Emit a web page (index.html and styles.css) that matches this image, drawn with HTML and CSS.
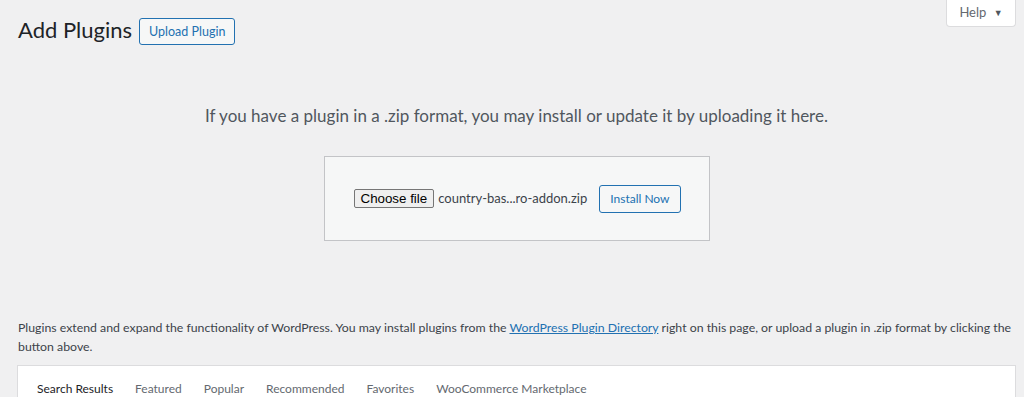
FILE: index.html
```html
<!DOCTYPE html>
<html lang="en">
<head>
    <meta charset="UTF-8">
    <title>Add Plugins</title>
    <link rel="stylesheet" href="styles.css">
</head>
<body>
    <div class="help-tab">
        <button class="help-link">Help <span class="arrow">&#9660;</span></button>
    </div>

    <div class="wrap">
        <div class="title-row">
            <h1>Add Plugins</h1>
            <a href="#" class="page-action">Upload Plugin</a>
        </div>

        <div class="upload-plugin">
            <p class="install-help">If you have a plugin in a .zip format, you may install or update it by uploading it here.</p>
            <form class="upload-form">
                <span class="file-input">
                    <span class="file-button">Choose file</span>
                    <span class="file-name">country-bas...ro-addon.zip</span>
                </span>
                <button type="button" class="button">Install Now</button>
            </form>
        </div>

        <p class="intro">Plugins extend and expand the functionality of WordPress. You may install plugins from the <a href="#">WordPress Plugin Directory</a> right on this page, or upload a plugin in .zip format by clicking the button above.</p>

        <div class="filter-bar">
            <ul class="filter-links">
                <li class="current">Search Results</li>
                <li>Featured</li>
                <li>Popular</li>
                <li>Recommended</li>
                <li>Favorites</li>
                <li>WooCommerce Marketplace</li>
            </ul>
        </div>
    </div>
</body>
</html>
```

FILE: styles.css
```css
body {
    margin: 0;
    background: #f0f0f1;
    color: #3c434a;
    font-family: Lato, sans-serif;
    font-size: 13px;
    line-height: 1.4;
    overflow: hidden;
}

.help-tab {
    position: absolute;
    top: 0;
    right: 8px;
}

.help-link {
    width: 70px;
    height: 27px;
    background: #fff;
    border: 1px solid #dcdcde;
    border-top: none;
    border-radius: 0 0 4px 4px;
    color: #646970;
    font-family: inherit;
    font-size: 13px;
    padding: 0 0 2px;
}

.help-link .arrow {
    font-size: 9px;
    margin-left: 4px;
    vertical-align: 1px;
    color: #50575e;
}

.wrap {
    padding: 0 8px 0 17px;
}

.title-row {
    display: flex;
    align-items: center;
    padding-top: 16px;
}

h1 {
    margin: 0 0 0 1px;
    font-size: 22px;
    font-weight: 400;
    color: #1d2327;
    line-height: 1.3;
}

.page-action {
    margin-left: 7px;
    margin-top: 2px;
    padding: 0 9px;
    height: 27px;
    line-height: 26px;
    border: 1px solid #2271b1;
    border-radius: 3px;
    background: #f6f7f7;
    color: #2271b1;
    text-decoration: none;
    font-size: 12.5px;
    white-space: nowrap;
    box-sizing: border-box;
}

.upload-plugin {
    display: flex;
    flex-direction: column;
    align-items: center;
}

.install-help {
    margin: 58px 0 0;
    font-size: 17px;
    color: #50575e;
    line-height: 1.5;
}

.upload-form {
    margin-top: 27px;
    width: 327px;
    padding: 28px 28px 27px 29px;
    background: #f6f7f7;
    border: 1px solid #c3c4c7;
    display: flex;
    align-items: center;
}

.file-input {
    display: flex;
    align-items: center;
    flex: 1;
    white-space: nowrap;
}

.file-button {
    font-family: "Liberation Sans", Arial, sans-serif;
    font-size: 13.33px;
    color: #000;
    background: #efefef;
    border: 1px solid #767676;
    border-radius: 2px;
    padding: 1px 6px;
    line-height: 15px;
}

.file-name {
    margin-left: 4px;
    color: #3c434a;
    font-size: 13px;
}

.button {
    height: 28px;
    padding: 0 10px;
    border: 1px solid #2271b1;
    border-radius: 3px;
    background: #f6f7f7;
    color: #2271b1;
    font-family: inherit;
    font-size: 12px;
    white-space: nowrap;
}

.intro {
    margin: 77px 0 0 1px;
    font-size: 12.3px;
    line-height: 19px;
}

.intro a {
    color: #2271b1;
}

.filter-bar {
    margin-top: 9px;
    background: #fff;
    border: 1px solid #dcdcde;
    height: 40px;
}

.filter-links {
    list-style: none;
    display: flex;
    gap: 22px;
    margin: 0;
    padding: 15px 0 0 19px;
    font-size: 12px;
}

.filter-links li {
    color: #646970;
}

.filter-links .current {
    color: #1d2327;
}
```
